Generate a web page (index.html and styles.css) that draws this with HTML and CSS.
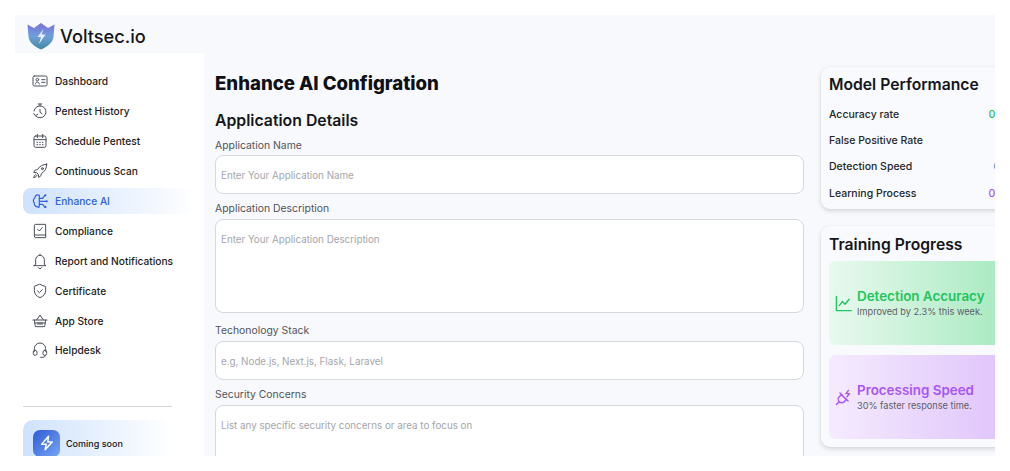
FILE: index.html
```html
<!DOCTYPE html>
<html lang="en">
<head>
<meta charset="utf-8">
<title>Voltsec.io</title>
<link rel="stylesheet" href="styles.css">
</head>
<body>
<div class="app">
  <header class="topbar">
    <svg class="logo" viewBox="0 0 28 28" width="28" height="28">
      <defs>
        <linearGradient id="sh" x1="0" y1="0" x2="0" y2="1"><stop offset="0" stop-color="#7a70dc"/><stop offset=".5" stop-color="#6f9fd8"/><stop offset="1" stop-color="#3f8aa0"/></linearGradient>
      </defs>
      <path d="M.5 2.500 L7 6 L14 1 L21 6 L27.500 2.500 L26.500 15 C25.500 21 20 25 14 27.500 C8 25 2.500 21 1.500 15 Z" fill="url(#sh)"/>
      <path d="M16.500 7 L10.500 15 H14 L12 22 L18.500 12.500 H14.500 Z" fill="#e8eef8"/>
    </svg>
    <span class="brand">Voltsec.io</span>
  </header>
  <div class="body">
    <aside class="sidebar">
      <nav class="nav">
        <a class="nav-item"><svg class="ico" viewBox="0 0 24 24"><rect x="1.500" y="4.500" width="21" height="15" rx="2"/><circle cx="8" cy="10" r="2"/><path d="M5 16.500c.5-2 1.500-3 3-3s2.500 1 3 3M14.500 10h5M14.500 14h5"/></svg>Dashboard</a>
        <a class="nav-item"><svg class="ico" viewBox="0 0 24 24"><path d="M9.500 1.500h5M12 1.500v3.500M5 19a9 9 0 1 0-2-7"/><path d="M2.500 15.500l2.500 3.500 3.500-2M12 9.500v4.500l3 2"/></svg>Pentest History</a>
        <a class="nav-item"><svg class="ico" viewBox="0 0 24 24"><rect x="3" y="4.500" width="18" height="17" rx="2.500"/><path d="M3 10h18M8 2v5M16 2v5M7.500 14h1M11.500 14h1M15.500 14h1M7.500 17.500h1M11.500 17.500h1M15.500 17.500h1"/></svg>Schedule Pentest</a>
        <a class="nav-item"><svg class="ico" viewBox="0 0 24 24"><path d="M22 2c-6 0-10.500 2.500-14 8L5 10.500l-2.500 3.500 4.500.5 2.500 2.500.5 4.500 3.500-2.500.5-3c5.500-3.500 8-8 8-14.500z"/><circle cx="15.500" cy="8.500" r="1.500"/><path d="M6 17c-1.500.5-3 2-3.500 5 3-.5 4.500-2 5-3.500"/></svg>Continuous Scan</a>
        <a class="nav-item active"><svg class="ico act" viewBox="0 0 24 24"><path d="M11 3.500C8 1.500 4.500 3.500 4.500 7 2 8.500 1 13 3.500 15c-.5 3 2 6 4.500 5.500 1.500 2 3 1 3-1V3.500z"/><path d="M11 8h5l3-4M11 12.500h10M11 17h5l3 4"/><circle cx="20" cy="3.500" r=".8"/><circle cx="22" cy="12.500" r=".8"/><circle cx="20" cy="21" r=".8"/></svg>Enhance AI</a>
        <a class="nav-item"><svg class="ico" viewBox="0 0 24 24"><path d="M3.500 18.500V4A2 2 0 0 1 5.500 2h15v20h-15a2 2 0 0 1-2-2zM3.500 18h17"/><path d="M8.500 9.500l2.500 2.500 4.500-5"/></svg>Compliance</a>
        <a class="nav-item"><svg class="ico" viewBox="0 0 24 24"><path d="M5.500 17V10a6.500 6.500 0 0 1 13 0v7l2.500 2H3zM9.500 22a2.800 2.800 0 0 0 5 0M12 1.500v2"/></svg>Report and Notifications</a>
        <a class="nav-item"><svg class="ico" viewBox="0 0 24 24"><path d="M12 2l8.500 3.500v6c0 5-3.500 8.500-8.500 10.500-5-2-8.500-5.500-8.500-10.500v-6z"/><path d="M8.500 12l2.500 2.500 4.500-4.500"/></svg>Certificate</a>
        <a class="nav-item"><svg class="ico" viewBox="0 0 24 24"><path d="M1.500 10.500h21M3.500 10.500l1.500 10h14l1.500-10M7 10.500l5-7.500 5 7.500M9 14v3.500M12 14v3.500M15 14v3.500M4 15h16"/></svg>App Store</a>
        <a class="nav-item"><svg class="ico" viewBox="0 0 24 24"><path d="M3.500 14v-4a8.500 8.500 0 0 1 17 0v4"/><rect x="2" y="12.500" width="5.500" height="7.500" rx="2.500"/><rect x="16.500" y="12.500" width="5.500" height="7.500" rx="2.500"/><path d="M20 20c0 1.500-1.500 3-3 3h-4"/></svg>Helpdesk</a>
      </nav>
      <div class="divider"></div>
      <div class="soon">
        <span class="soon-icon"><svg viewBox="0 0 24 24" width="18" height="18"><path d="M14 3L5 13.500h6L9.500 21 19 10.500h-6z"/></svg></span>
        <span class="soon-text">Coming soon</span>
      </div>
    </aside>
    <main class="main">
      <section class="form">
        <h1 class="title">Enhance AI Configration</h1>
        <h2 class="subtitle">Application Details</h2>
        <label class="label">Application Name</label>
        <div class="field input">Enter Your Application Name</div>
        <label class="label">Application Description</label>
        <div class="field area">Enter Your Application Description</div>
        <label class="label">Techonology Stack</label>
        <div class="field input">e.g, Node.js, Next.js, Flask, Laravel</div>
        <label class="label">Security Concerns</label>
        <div class="field area">List any specific security concerns or area to focus on</div>
      </section>
      <section class="side">
        <div class="card perf">
          <h3 class="card-title">Model Performance</h3>
          <div class="row"><span>Accuracy rate</span><b class="green">0.00%</b></div>
          <div class="row"><span>False Positive Rate</span><b class="red">0%</b></div>
          <div class="row"><span>Detection Speed</span><b class="blue">0.00s</b></div>
          <div class="row"><span>Learning Process</span><b class="purple">0.00%</b></div>
        </div>
        <div class="card train">
          <h3 class="card-title">Training Progress</h3>
          <div class="tile tile-green">
            <svg class="tile-ico" viewBox="0 0 24 24"><path d="M2 2v20h21"/><path d="M6 15l4.500-6 3.500 4 6-7"/></svg>
            <div><div class="tile-title">Detection Accuracy</div><div class="tile-sub">Improved by 2.3% this week.</div></div>
          </div>
          <div class="tile tile-purple">
            <svg class="tile-ico" viewBox="0 0 24 24"><path d="M2 22l4-4M9 8l7 7-3 3a4.500 4.500 0 0 1-7-7zM7 5.500l3.500 3.500M15 13.500l3.500 3.500"/><path d="M19 2l-3.500 4.500h5L17 11"/></svg>
            <div><div class="tile-title">Processing Speed</div><div class="tile-sub">30% faster response time.</div></div>
          </div>
        </div>
      </section>
    </main>
  </div>
</div>
</body>
</html>
```
FILE: styles.css
```css
* { box-sizing: border-box; margin: 0; padding: 0; }
html, body { height: 100%; background: #fff; overflow: hidden; }
body { padding: 15px; font-family: "Inter", "Noto Sans", sans-serif; color: #15171c; }
.app { width: 980px; height: 441px; overflow: hidden; display: flex; flex-direction: column; background: #f8f9fc; }
.topbar { height: 38px; flex: none; display: flex; align-items: center; padding: 4px 0 0 12px; gap: 5px; }
.brand { font-size: 18.2px; font-weight: 500; color: #14161b; }
.body { flex: 1; display: flex; min-height: 0; }
.sidebar { width: 189px; flex: none; background: #fff; padding: 15px 0 0 8px; border-top-right-radius: 3px; }
.nav { display: flex; flex-direction: column; gap: 3px; }
.nav-item { height: 26.9px; width: 170px; display: flex; align-items: center; gap: 7px; padding-left: 9px; font-size: 10.2px; font-weight: 500; color: #1b1d22; border-radius: 8px; }
.ico { width: 16px; height: 16px; flex: none; fill: none; stroke: #4b4f58; stroke-width: 1.5; stroke-linecap: round; stroke-linejoin: round; }
.nav-item.active { background: linear-gradient(90deg, #cfe2fd, #f9fbff 90%, #fff); color: #2f62e0; }
.nav-item.active .ico { stroke: #2f62e0; stroke-width: 1.8; }
.divider { width: 149px; height: 1px; background: #d4d6da; margin-top: 42px; }
.soon { width: 149px; height: 60px; margin-top: 13px; padding: 10px 0 0 10px; display: flex; gap: 6px; border-radius: 10px; background: linear-gradient(90deg, #cfe2fd, #fff); }
.soon-icon { width: 27px; height: 27px; border-radius: 7px; background: linear-gradient(135deg, #2f5bd6, #76a6f3); display: flex; align-items: center; justify-content: center; }
.soon-icon path { fill: none; stroke: #fff; stroke-width: 2; stroke-linejoin: round; }
.soon-text { font-size: 9px; font-weight: 500; line-height: 27px; }
.main { flex: 1; display: flex; padding-left: 11px; min-width: 0; }
.form { width: 589px; flex: none; }
.title { font-size: 18.6px; font-weight: 800; line-height: 24px; margin-top: 18px; color: #0e1014; }
.subtitle { font-size: 15.8px; font-weight: 600; line-height: 20px; margin-top: 16px; color: #15171c; }
.label { display: block; font-size: 10.4px; line-height: 14px; color: #50535a; margin-top: 7.5px; margin-bottom: 3.5px; }
.subtitle + .label { margin-top: 7.5px; margin-bottom: 2.5px; }
.field { background: #fff; border: 1px solid #d6d8de; border-radius: 8px; font-size: 9.8px; color: #a4a6ac; padding-left: 5px; }
.input { height: 39px; display: flex; align-items: center; padding-top: 1px; }
.area { height: 94px; padding-top: 14px; margin-bottom: 10.5px; }
.side { width: 209px; flex: none; margin-left: 17px; padding-top: 14px; }
.card { background: #f9fafd; border-radius: 9px; box-shadow: 0 2px 5px rgba(0,0,0,.14), 0 0 2px rgba(0,0,0,.05); padding: 8px 8px 0; }
.perf { height: 142px; }
.train { height: 221px; margin-top: 17px; }
.card-title { font-size: 15.7px; font-weight: 600; line-height: 20px; color: #14161b; }
.perf .card-title { margin-bottom: 6px; }
.row { display: flex; justify-content: space-between; align-items: center; height: 26.3px; font-size: 10.5px; font-weight: 500; color: #24262b; }
.row b { font-weight: 500; }
.green { color: #22c55e; }
.red { color: #ef4444; }
.blue { color: #3b82f6; }
.purple { color: #a855f7; }
.tile { height: 84px; border-radius: 6px; display: flex; align-items: center; gap: 5px; padding-left: 6px; }
.train .card-title { margin-bottom: 6px; margin-top: 1px; }
.tile + .tile { margin-top: 10px; }
.tile-green { background: linear-gradient(90deg, #e9f9ef, #a6e9bf 94%); }
.tile-purple { background: linear-gradient(90deg, #f5ebfe, #dfc3fb 94%); }
.tile-ico { width: 17px; height: 17px; flex: none; fill: none; stroke-width: 2; stroke-linecap: round; stroke-linejoin: round; }
.tile-green .tile-ico { stroke: #22c55e; }
.tile-purple .tile-ico { stroke: #a855f7; }
.tile-title { font-size: 13.4px; font-weight: 600; line-height: 17px; white-space: nowrap; padding-top: 1px; }
.tile-green .tile-title { color: #22c55e; }
.tile-purple .tile-title { color: #a855f7; }
.tile-sub { font-size: 9.2px; line-height: 14px; color: #5c5f66; white-space: nowrap; }
```
